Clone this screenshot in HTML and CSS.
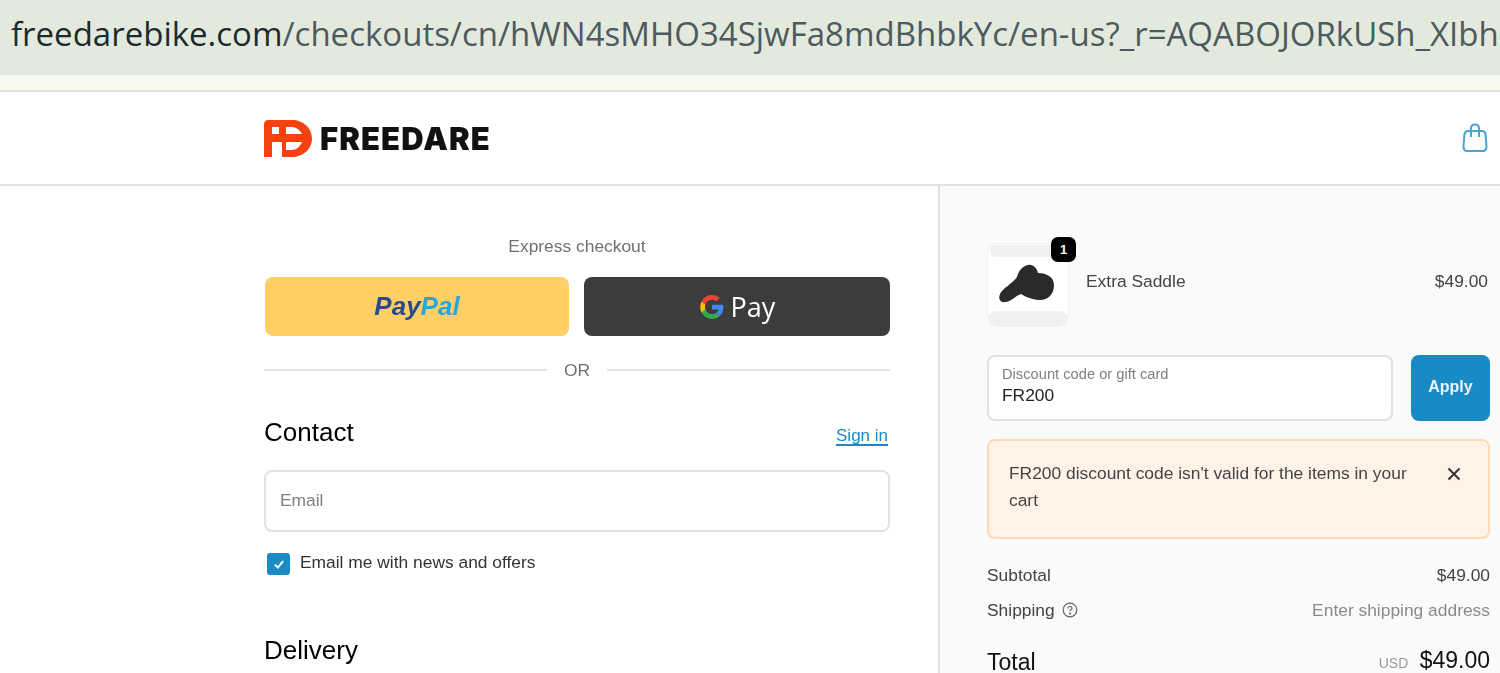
FILE: index.html
```html
<!DOCTYPE html>
<html lang="en">
<head>
    <meta charset="UTF-8">
    <meta name="viewport" content="width=device-width, initial-scale=1.0">
    <title>Checkout - Freedare</title>
    <link rel="stylesheet" href="styles.css">
</head>
<body>

<!-- Browser address bar -->
<div class="url-bar">
    <span class="url-host">freedarebike.com</span>/checkouts/cn/hWN4sMHO34SjwFa8mdBhbkYc/en-us?_r=AQABOJORkUSh_XIbh
</div>
<div class="url-strip"></div>

<!-- Shop header -->
<header class="shop-header">
    <div class="logo">
        <svg class="logo-mark" viewBox="0 0 48 37" width="48" height="37">
            <path fill="#f5420f" fill-rule="evenodd" d="M4 0H28C39 0 48 8 48 18.500C48 29 39 37 28 37H18V22H8V37H0V4C0 2 2 0 4 0ZM8 7V14H15V7ZM22 7V14H38C36 10 32 7 28 7ZM22 22V30H28C32 30 36 27 38 22Z"/>
        </svg>
        <span class="logo-text">FREEDARE</span>
    </div>
    <svg class="bag-icon" viewBox="0 0 26 30" width="26" height="30" fill="none" stroke="#4ba3d6" stroke-width="2">
        <path d="M6 8H20C22 8 23 9 23.500 11L24.500 23C24.500 26 23 28 21 28H5C3 28 1.500 26 1.500 23L2.500 11C3 9 4 8 6 8Z"/>
        <path d="M9 14V5.500C9 3 10.500 1.500 13 1.500C15.500 1.500 17 3 17 5.500V14"/>
    </svg>
</header>

<main class="checkout">
    <!-- Left column: form -->
    <section class="form-col">
        <p class="express-title">Express checkout</p>
        <div class="express-buttons">
            <button class="pay-btn paypal"><span class="pp-dark">Pay</span><span class="pp-light">Pal</span></button>
            <button class="pay-btn gpay">
                <svg viewBox="0 0 48 48" width="26" height="26">
                    <path fill="#4285f4" d="M45 24.500c0-1.600-.1-3.100-.4-4.500H24v8.500h11.800c-.5 2.700-2 5-4.400 6.600l7 5.400C42.600 36.700 45 31.100 45 24.500z"/>
                    <path fill="#34a853" d="M24 46c5.900 0 10.900-2 14.400-5.400l-7-5.400c-1.900 1.300-4.400 2-7.400 2-5.700 0-10.500-3.800-12.200-9l-7.200 5.600C8.200 41.100 15.500 46 24 46z"/>
                    <path fill="#fbbc05" d="M11.800 28.700c-.9-2.700-.9-6.700 0-9.400l-7.200-5.600c-3.100 6.100-3.100 14.500 0 20.600z"/>
                    <path fill="#ea4335" d="M24 10.500c3.200 0 6 1.100 8.300 3.300l6.200-6.200C34.900 4.200 29.900 2 24 2 15.500 2 8.200 6.900 4.600 13.700l7.200 5.600c1.700-5.200 6.500-8.800 12.200-8.800z"/>
                </svg>
                <span>Pay</span>
            </button>
        </div>
        <div class="or-row"><span>OR</span></div>

        <div class="section-head">
            <h2>Contact</h2>
            <a class="sign-in" href="#">Sign in</a>
        </div>
        <input class="email-input" type="text" placeholder="Email">
        <label class="news-row">
            <span class="check-box">
                <svg viewBox="0 0 12 12" width="14" height="14" fill="none" stroke="#fff" stroke-width="1.600"><path d="M2.500 6.500L5 9L9.500 3.500"/></svg>
            </span>
            <span class="news-text">Email me with news and offers</span>
        </label>
        <h2 class="delivery-title">Delivery</h2>
    </section>

    <!-- Right column: order summary -->
    <aside class="summary-col">
        <div class="line-item">
            <div class="thumb">
                <svg viewBox="0 0 80 82" width="80" height="82">
                    <rect x="2" y="1" width="76" height="12" rx="5" fill="#f0f0f0"/>
                    <rect x="0" y="67" width="80" height="15" rx="8" fill="#f0f0f0"/>
                    <path fill="#2a2a2a" d="M12 50C15 44 24 40 29 33C31 25 37 20 43 21C47 22 49 25 50 29C57 29 66 32 66 41C66 50 60 56 52 56C45 56 39 54 33 50C27 52 23 58 17 58C12 59 10 55 12 50Z"/>
                </svg>
                <span class="qty-badge">1</span>
            </div>
            <span class="item-name">Extra Saddle</span>
            <span class="item-price">$49.00</span>
        </div>

        <div class="discount-row">
            <div class="discount-field">
                <span class="field-label">Discount code or gift card</span>
                <span class="field-value">FR200</span>
            </div>
            <button class="apply-btn">Apply</button>
        </div>

        <div class="alert">
            <p>FR200 discount code isn't valid for the items in your cart</p>
            <svg viewBox="0 0 14 14" width="14" height="14" stroke="#333" stroke-width="2"><path d="M1.500 1.500L12.500 12.500M12.500 1.500L1.500 12.500"/></svg>
        </div>

        <div class="total-line subtotal">
            <span>Subtotal</span>
            <span>$49.00</span>
        </div>
        <div class="total-line shipping">
            <span class="ship-label">Shipping
                <svg viewBox="0 0 16 16" width="16" height="16" fill="none" stroke="#666" stroke-width="1.200"><circle cx="8" cy="8" r="6.800"/><path d="M6 6.500C6 5 7 4.500 8 4.500C9 4.500 10 5 10 6.300C10 7.800 8 7.600 8 9.300"/><circle cx="8" cy="11.500" r=".5"/></svg>
            </span>
            <span class="ship-note">Enter shipping address</span>
        </div>
        <div class="total-line grand">
            <span>Total</span>
            <span class="grand-price"><small>USD</small> $49.00</span>
        </div>
    </aside>
</main>

</body>
</html>
```

FILE: styles.css
```css
/* Basic Reset */
* {
    margin: 0;
    padding: 0;
    box-sizing: border-box;
}

html, body {
    height: 673px;
    overflow: hidden;
}

body {
    font-family: "Liberation Sans", Arial, sans-serif;
    background-color: #fff;
    color: #333;
    /* the source picture is a soft, upscaled capture */
    filter: blur(0.5px);
}

/* Address bar */
.url-bar {
    height: 75px;
    padding: 14px 0 0 11px;
    background-color: #e3eadd;
    color: #4d5a60;
    font-family: "Open Sans", sans-serif;
    font-size: 33px;
    line-height: 40px;
    white-space: nowrap;
    overflow: hidden;
}

.url-host {
    color: #1f2a2e;
}

.url-strip {
    height: 17px;
    background-color: #f6f9ee;
    border-bottom: 2px solid #e0e4da;
}

/* Header */
.shop-header {
    height: 94px;
    padding: 0 12px 0 264px;
    display: flex;
    justify-content: space-between;
    align-items: center;
    border-bottom: 2px solid #e2e2e2;
}

.logo {
    display: flex;
    align-items: center;
    gap: 8px;
}

.logo-text {
    font-family: Inter, sans-serif;
    font-weight: 900;
    font-size: 31px;
    letter-spacing: 1.100px;
    color: #111;
}

/* Layout */
.checkout {
    display: grid;
    grid-template-columns: 938px 1fr;
    height: 487px;
}

.form-col {
    padding: 51px 48px 0 264px;
}

.summary-col {
    padding: 57px 10px 0 47px;
    background-color: #fafafa;
    border-left: 2px solid #e2e2e2;
}

/* Express checkout */
.express-title {
    text-align: center;
    font-size: 17.400px;
    line-height: 18px;
    color: #707070;
}

.express-buttons {
    display: flex;
    gap: 15px;
    margin-top: 22px;
}

.pay-btn {
    flex: 1;
    height: 59px;
    border: none;
    border-radius: 8px;
    display: flex;
    align-items: center;
    justify-content: center;
}

.paypal {
    flex: 0 0 304px;
    margin-left: 1px;
    background-color: #ffcf66;
    font-style: italic;
    font-weight: bold;
    font-size: 26px;
}

.pp-dark {
    color: #2b4a8c;
}

.pp-light {
    color: #2ba6d8;
}

.gpay {
    gap: 6px;
    background-color: #3c3c3c;
    color: #fff;
    font-family: "Open Sans", sans-serif;
    font-size: 27px;
}

.or-row {
    display: flex;
    align-items: center;
    gap: 17px;
    margin-top: 24px;
    font-size: 17.400px;
    line-height: 20px;
    color: #707070;
}

.or-row::before,
.or-row::after {
    content: "";
    flex: 1;
    height: 2px;
    background-color: #e2e2e2;
}

/* Contact */
.section-head {
    display: flex;
    justify-content: space-between;
    align-items: flex-end;
    margin-top: 36px;
}

h2 {
    font-size: 26px;
    font-weight: normal;
    line-height: 32px;
    color: #000;
}

.sign-in {
    font-size: 17px;
    line-height: 20px;
    color: #1a8ac4;
    margin: 0 2px 2px 0;
    text-underline-offset: 3px;
    text-decoration-thickness: 2px;
    text-decoration-skip-ink: none;
}

.email-input {
    display: block;
    width: 100%;
    height: 62px;
    margin-top: 22px;
    padding: 0 14px 2px;
    border: 2px solid #e2e2e2;
    border-radius: 8px;
    font-family: inherit;
    font-size: 17.400px;
    outline: none;
}

.email-input::placeholder {
    color: #808080;
}

.news-row {
    display: flex;
    align-items: center;
    gap: 10px;
    margin-top: 21px;
    padding-left: 3px;
    font-size: 17.400px;
    color: #333;
}

.news-text {
    line-height: 18px;
    margin-bottom: 4px;
}

.check-box {
    width: 23px;
    height: 22px;
    border-radius: 3px;
    background-color: #1a8ac4;
    display: flex;
    align-items: center;
    justify-content: center;
}

.delivery-title {
    margin-top: 59px;
}

/* Summary */
.line-item {
    display: flex;
    align-items: center;
    font-size: 17.400px;
    color: #444;
}

.thumb {
    position: relative;
    width: 82px;
    height: 84px;
    background-color: #fff;
    border: 1px solid #f0f0f0;
    border-radius: 10px;
    margin-right: 17px;
}

.thumb svg {
    display: block;
    border-radius: 9px;
}

.qty-badge {
    position: absolute;
    top: -7px;
    right: -8px;
    width: 25px;
    height: 25px;
    border-radius: 7px;
    background-color: #000;
    color: #fff;
    font-size: 13px;
    font-weight: bold;
    text-align: center;
    line-height: 25px;
}

.item-name,
.item-price {
    margin-bottom: 8px;
}

.item-price {
    margin-left: auto;
    margin-right: 2px;
}

.discount-row {
    display: flex;
    gap: 18px;
    margin-top: 28px;
}

.discount-field {
    flex: 1;
    height: 66px;
    padding: 10px 13px 0;
    background-color: #fff;
    border: 2px solid #e2e2e2;
    border-radius: 8px;
    display: flex;
    flex-direction: column;
}

.field-label {
    font-size: 14.700px;
    line-height: 15px;
    color: #808080;
}

.field-value {
    font-size: 17.400px;
    line-height: 27px;
    color: #222;
}

.apply-btn {
    width: 79px;
    padding-bottom: 2px;
    border: none;
    border-radius: 8px;
    background-color: #1a8ac4;
    color: #e8f4fb;
    font-family: inherit;
    font-size: 16px;
    font-weight: bold;
}

.alert {
    display: flex;
    justify-content: space-between;
    align-items: flex-start;
    gap: 27px;
    height: 100px;
    margin-top: 18px;
    padding: 19px 27px 0 20px;
    background-color: #fff3e8;
    border: 2px solid #fddcb5;
    border-radius: 8px;
    font-size: 17.400px;
    line-height: 27px;
    color: #444;
}

.alert svg {
    flex-shrink: 0;
    margin-top: 7px;
}

.total-line {
    display: flex;
    justify-content: space-between;
    align-items: center;
    font-size: 17.400px;
    color: #444;
}

.subtotal {
    margin-top: 26px;
    line-height: 20px;
}

.shipping {
    margin-top: 15px;
    line-height: 20px;
}

.ship-label {
    display: flex;
    align-items: center;
    gap: 7px;
}

.ship-note {
    color: #8a8a8a;
}

.grand {
    margin-top: 25px;
    font-size: 23px;
    line-height: 30px;
    color: #111;
}

.grand small {
    font-size: 14px;
    color: #999;
    margin-right: 5px;
}
```
